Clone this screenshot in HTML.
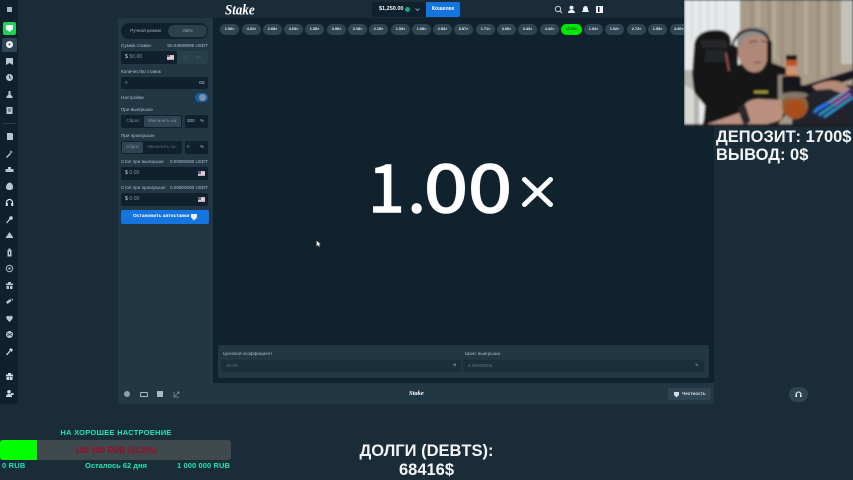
<!DOCTYPE html>
<html><head><meta charset="utf-8"><style>
html,body{margin:0;padding:0;width:853px;height:480px;overflow:hidden;background:#1a2c38;font-family:"Liberation Sans","Noto Sans CJK SC",sans-serif}
#a{position:absolute;left:0;top:0;width:853px;height:480px;filter:blur(.35px)}
.b{position:absolute}
.t{position:absolute;white-space:nowrap;line-height:1;font-size:4.600px;color:#b1bad3}
.r{text-align:right}
.c{position:absolute;top:24px;width:19px;height:11px;border-radius:6px;background:#2f4553;color:#e8edf2;font-size:3.800px;font-weight:bold;line-height:11px;text-align:center}
.inp{position:absolute;background:#0f212e;border-radius:2px}
.gr{color:#7f8fa0}
.s{position:absolute;left:5px;width:9px;height:9px}
.ic{fill:#b9c5d0}
.n{position:absolute;top:151px;white-space:nowrap;font-family:"Noto Sans CJK SC",sans-serif;font-size:66px;line-height:66px;color:#fff;-webkit-text-stroke:1.500px #fff}
</style></head><body><div id="a">
<!-- structural backgrounds -->
<div class="b" style="left:0;top:0;width:18px;height:404px;background:#0f212e"></div>
<div class="b" style="left:18px;top:0;width:835px;height:18px;background:#1a2c38"></div>
<div class="b" style="left:118px;top:18px;width:95px;height:366px;background:#213743"></div>
<div class="b" style="left:213px;top:18px;width:501px;height:366px;background:#10222e"></div>
<div class="b" style="left:118px;top:383px;width:596px;height:21px;background:#213743"></div>
<div class="b" style="left:7px;top:7px;width:5px;height:5px;background:#aab6c0"></div>
<div class="b" style="left:3px;top:22px;width:13px;height:13px;background:#1fd05a;border-radius:2px"></div>
<svg class="s" style="top:24px" viewBox="0 0 9 9"><path d="M1 1h7v4l-3.500 3L1 5z" fill="#fff"/></svg>
<div class="b" style="left:2px;top:38px;width:15px;height:14px;background:#2f4553;border-radius:2px"></div>
<svg class="s" style="top:40px" viewBox="0 0 9 9"><circle cx="4.500" cy="4.500" r="3.500" fill="#eef2f5"/><circle cx="4.500" cy="4.500" r="1" fill="#2f4553"/></svg>
<svg class="s" style="top:57px" viewBox="0 0 9 9"><path class="ic" d="M1 1h7v7L4.500 6 1 8z"/></svg>
<svg class="s" style="top:73px" viewBox="0 0 9 9"><circle class="ic" cx="4.500" cy="4.500" r="3.500"/><path d="M4.500 2.500v2l1.500 1" stroke="#0f212e" fill="none" stroke-width=".8"/></svg>
<svg class="s" style="top:90px" viewBox="0 0 9 9"><path class="ic" d="M3.500 1h2v3.500l2 2v1.500h-6V6.500l2-2z"/></svg>
<svg class="s" style="top:106px" viewBox="0 0 9 9"><path class="ic" d="M1.500 1h6v7h-6z"/><path d="M3 3h3M3 5h3" stroke="#0f212e" stroke-width=".7"/></svg>
<div class="b" style="left:3px;top:123px;width:13px;height:1px;background:#2a3f4c"></div>
<svg class="s" style="top:132px" viewBox="0 0 9 9"><path class="ic" d="M2 1h5l1 1v6H2z"/></svg>
<svg class="s" style="top:149px" viewBox="0 0 9 9"><path class="ic" d="M1 8l4-4 1 1-4 4zM6 1l.5 1.500L8 3l-1.500.5L6 5l-.5-1.500L4 3l1.500-.5z"/></svg>
<svg class="s" style="top:165px" viewBox="0 0 9 9"><path class="ic" d="M3 2h3v2h2.500v3H.5V4H3z"/></svg>
<svg class="s" style="top:182px" viewBox="0 0 9 9"><path class="ic" d="M4.500.5C7 1 8 3 8 5c0 2-1 3-3.500 3S1 7 1 5s1.500-4 3.500-4.500z"/></svg>
<svg class="s" style="top:198px" viewBox="0 0 9 9"><path d="M1.500 6V4.500a3 3 0 0 1 6 0V6" stroke="#dfe6ec" fill="none" stroke-width="1.200"/><rect x=".8" y="5" width="2" height="3" fill="#dfe6ec"/><rect x="6.200" y="5" width="2" height="3" fill="#dfe6ec"/></svg>
<svg class="s" style="top:215px" viewBox="0 0 9 9"><path d="M1.500 8L5 4" stroke="#cdd6de" stroke-width="1.200"/><circle cx="6" cy="3" r="1.800" fill="#cdd6de"/></svg>
<svg class="s" style="top:231px" viewBox="0 0 9 9"><path class="ic" d="M4.500 1l2 3 2 3H.5l2-3z"/></svg>
<svg class="s" style="top:248px" viewBox="0 0 9 9"><path class="ic" d="M2.500 2h4v6.500h-4zM3.500.5h2V2h-2z"/><rect x="4" y="3.500" width="1" height="3" fill="#0f212e"/></svg>
<svg class="s" style="top:264px" viewBox="0 0 9 9"><circle cx="4.500" cy="4.500" r="3.200" fill="none" stroke="#9fb0bd" stroke-width="1.100"/><circle cx="4.500" cy="4.500" r="1.200" fill="#9fb0bd"/></svg>
<svg class="s" style="top:281px" viewBox="0 0 9 9"><path class="ic" d="M1 2.500h7V4H1zM1.500 4.700h2.500V8H1.500zM5 4.700h2.500V8H5zM3 1h3v1.500H3z"/></svg>
<svg class="s" style="top:297px" viewBox="0 0 9 9"><path class="ic" d="M1 5l4-3 1.500 2-4 3zM6 1.500l2 .5-.5 2z"/></svg>
<svg class="s" style="top:314px" viewBox="0 0 9 9"><path class="ic" d="M1 3l2-1.500 1.500 1 1.500-1L8 3 7 5.500 4.500 8 2 5.500z"/></svg>
<svg class="s" style="top:330px" viewBox="0 0 9 9"><circle class="ic" cx="4.500" cy="4.500" r="3.500"/><path d="M2 3l5 3M7 3L2 6" stroke="#0f212e" stroke-width=".7"/></svg>
<svg class="s" style="top:347px" viewBox="0 0 9 9"><path d="M1.500 8L5 4" stroke="#d5dde3" stroke-width="1.300"/><path fill="#d5dde3" d="M4 2.500L6 1l2 2-1.500 2z"/></svg>
<svg class="s" style="top:372px" viewBox="0 0 9 9"><path fill="#d5dde3" d="M1 2.500h7V4.200H1zM1.500 4.800h2.700V8H1.500zM4.800 4.800h2.700V8H4.800zM3 1h3v1.500H3z"/></svg>
<svg class="s" style="top:389px" viewBox="0 0 9 9"><circle fill="#d5dde3" cx="4" cy="2.800" r="1.800"/><path fill="#d5dde3" d="M1 8c0-2 1.500-3 3-3s3 1 3 3z"/><path fill="#d5dde3" d="M6 4h2.500v2H6z"/></svg>

<!-- Header -->
<div class="t" style="left:225px;top:2px;font:italic bold 13px 'Liberation Serif',serif;color:#fff;line-height:14px;transform:scaleY(1.15);transform-origin:left top">Stake</div>
<div class="b" style="left:372px;top:2px;width:54px;height:15px;background:#0f212e;border-radius:2px 0 0 2px"></div>
<div class="t" style="left:379px;top:6.500px;font-size:5.500px;font-weight:bold;color:#eef2f5">$1,250.00</div>
<div class="b" style="left:405px;top:7px;width:5px;height:5px;border-radius:50%;background:#26a17b"></div>
<svg class="b" style="left:415px;top:8px;width:5px;height:3px" viewBox="0 0 5 3"><path d="M.5.500l2 2 2-2" stroke="#b1bad3" fill="none" stroke-width=".8"/></svg>
<div class="b" style="left:426px;top:2px;width:34px;height:15px;background:#1475e1;border-radius:0 2px 2px 0"></div>
<div class="t" style="left:426px;top:6.500px;width:34px;text-align:center;font-size:5.200px;font-weight:bold;color:#fff">Кошелек</div>
<svg class="b" style="left:554px;top:5px;width:9px;height:9px" viewBox="0 0 9 9"><circle cx="4" cy="4" r="2.700" fill="none" stroke="#d5dde3" stroke-width=".9"/><path d="M6 6l2 2" stroke="#d5dde3"/></svg>
<svg class="b" style="left:567px;top:5px;width:9px;height:9px" viewBox="0 0 9 9"><circle cx="4.500" cy="2.800" r="2" fill="#eef2f5"/><path d="M1 8c0-2 1.500-3 3.500-3S8 6 8 8z" fill="#eef2f5"/></svg>
<svg class="b" style="left:581px;top:5px;width:9px;height:9px" viewBox="0 0 9 9"><path d="M4.500 1C6.500 1 7 3 7 5l1 2H1l1-2C2 3 2.500 1 4.500 1z" fill="#eef2f5"/></svg>
<svg class="b" style="left:595px;top:5px;width:9px;height:9px" viewBox="0 0 9 9"><path d="M1 1h7v7H1z" fill="#eef2f5"/><path d="M3 2h1.500v5H3z" fill="#0f212e"/></svg>

<!-- Chips -->
<div class="c" style="left:220px">1.00×</div><div class="c" style="left:242px">4.31×</div><div class="c" style="left:263px">2.68×</div><div class="c" style="left:284px">4.03×</div><div class="c" style="left:305px">1.35×</div><div class="c" style="left:327px">3.96×</div><div class="c" style="left:348px">2.18×</div><div class="c" style="left:369px">2.15×</div><div class="c" style="left:391px">1.53×</div><div class="c" style="left:412px">1.68×</div><div class="c" style="left:433px">2.53×</div><div class="c" style="left:454px">8.87×</div><div class="c" style="left:476px">1.71×</div><div class="c" style="left:497px">3.06×</div><div class="c" style="left:518px">4.43×</div><div class="c" style="left:540px">4.42×</div>
<div class="c" style="left:561px;width:21px;background:#00e701;color:#05360a">17.52×</div>
<div class="c" style="left:584px">1.02×</div><div class="c" style="left:605px">1.02×</div><div class="c" style="left:627px">2.72×</div><div class="c" style="left:648px">1.05×</div><div class="c" style="left:670px;width:14px;border-radius:6px 0 0 6px;text-align:left;padding-left:4px;box-sizing:border-box">4.30×</div>

<!-- Panel -->
<div class="inp" style="left:121px;top:23px;width:87px;height:16px;border-radius:8px"></div>
<div class="b" style="left:168px;top:25px;width:39px;height:12px;border-radius:6px;background:#2a404d"></div>
<div class="t" style="left:122px;top:28.500px;width:47px;text-align:center;color:#9fb0bd">Ручной режим</div>
<div class="t" style="left:168px;top:28.500px;width:39px;text-align:center;color:#9fb0bd">Авто</div>
<div class="t" style="left:121px;top:44px">Сумма ставки</div>
<div class="t r" style="right:645px;top:44px">50.04999995 USDT</div>
<div class="inp" style="left:121px;top:51px;width:56px;height:13px"></div>
<div class="b" style="left:177px;top:51px;width:31px;height:13px;background:#283f4c;border-radius:0 2px 2px 0"></div>
<div class="t gr" style="left:125px;top:55px;font-size:5.200px"><span style="color:#c8d2da">$</span> 50.00</div>
<div class="b" style="left:167px;top:54.500px;width:7px;height:5px;background:linear-gradient(#d8a8b0,#e8d8dc,#c8a0aa)"></div>
<div class="b" style="left:167px;top:54.500px;width:3px;height:2.500px;background:#5a6a90"></div>
<div class="t" style="left:183px;top:55.500px;color:#4e6472">½</div>
<div class="t" style="left:196px;top:55.500px;color:#4e6472">2×</div>
<div class="t" style="left:121px;top:69.500px">Количество ставок</div>
<div class="inp" style="left:121px;top:77px;width:87px;height:12px"></div>
<div class="t gr" style="left:125px;top:80.500px">0</div>
<div class="t" style="left:199px;top:78.500px;font-size:8px">∞</div>
<div class="t" style="left:121px;top:95.500px">Настройки</div>
<div class="b" style="left:195px;top:93px;width:13px;height:9px;border-radius:5px;background:#1d5ea8"></div>
<div class="b" style="left:199px;top:94px;width:7px;height:7px;border-radius:50%;background:#7f929f"></div>
<div class="t" style="left:121px;top:108px">При выигрыше</div>
<div class="inp" style="left:121px;top:115px;width:61px;height:13px"></div>
<div class="b" style="left:144px;top:116px;width:37px;height:11px;background:#2f4553;border-radius:1px"></div>
<div class="t gr" style="left:122px;top:119px;width:22px;text-align:center">Сброс</div>
<div class="t gr" style="left:144px;top:119px;width:37px;text-align:center;color:#8494a2">Увеличить на:</div>
<div class="inp" style="left:185px;top:115px;width:23px;height:13px"></div>
<div class="t" style="left:187px;top:119px">200</div>
<div class="t" style="left:200px;top:119px">%</div>
<div class="t" style="left:121px;top:134px">При проигрыше</div>
<div class="inp" style="left:121px;top:141px;width:61px;height:13px"></div>
<div class="b" style="left:122px;top:142px;width:21px;height:11px;background:#2f4553;border-radius:1px"></div>
<div class="t gr" style="left:122px;top:145px;width:21px;text-align:center">Сброс</div>
<div class="t" style="left:147px;top:145px;color:#5b7080">Увеличить на:</div>
<div class="inp" style="left:185px;top:141px;width:23px;height:13px"></div>
<div class="t gr" style="left:187px;top:145px">0</div>
<div class="t" style="left:200px;top:145px">%</div>
<div class="t" style="left:121px;top:160px">Стоп при выигрыше</div>
<div class="t r" style="right:645px;top:160px">0.00000000 USDT</div>
<div class="inp" style="left:121px;top:167px;width:87px;height:13px"></div>
<div class="t gr" style="left:125px;top:171px;font-size:5.200px"><span style="color:#c8d2da">$</span> 0.00</div>
<div class="b" style="left:198px;top:171px;width:7px;height:5px;background:linear-gradient(#d8a8b0,#e8d8dc,#c8a0aa)"></div>
<div class="b" style="left:198px;top:171px;width:3px;height:2.500px;background:#5a6a90"></div>
<div class="t" style="left:121px;top:186px">Стоп при проигрыше</div>
<div class="t r" style="right:645px;top:186px">0.00000000 USDT</div>
<div class="inp" style="left:121px;top:193px;width:87px;height:13px"></div>
<div class="t gr" style="left:125px;top:197px;font-size:5.200px"><span style="color:#c8d2da">$</span> 0.00</div>
<div class="b" style="left:198px;top:197px;width:7px;height:5px;background:linear-gradient(#d8a8b0,#e8d8dc,#c8a0aa)"></div>
<div class="b" style="left:198px;top:197px;width:3px;height:2.500px;background:#5a6a90"></div>
<div class="b" style="left:121px;top:210px;width:88px;height:14px;background:#1475e1;border-radius:2px"></div>
<div class="t" style="left:133px;top:214.500px;font-size:4.800px;font-weight:bold;color:#fff">Остановить автоставки</div>
<svg class="b" style="left:190px;top:213px;width:8px;height:8px" viewBox="0 0 8 8"><path d="M1 1h6v3.500L4 7.500 1 4.500z" fill="#e8f0fa"/></svg>

<!-- Game -->
<div class="n" style="left:368px">1</div>
<div class="n" style="left:407.500px">.</div>
<div class="n" style="left:424.400px;transform:scaleX(1.2);transform-origin:left top">00</div>
<svg class="b" style="left:521px;top:176px;width:35px;height:33px" viewBox="0 0 35 33"><path d="M3.500 3.500L29.500 28.500M29.500 3.500L3.500 28.500" stroke="#fff" stroke-width="5" stroke-linecap="round"/></svg>
<svg class="b" style="left:316px;top:240px;width:6px;height:8px" viewBox="0 0 6 8"><path d="M.5.500v6l1.500-1.500 1 2 1-.5-1-2h2z" fill="#fff" stroke="#222" stroke-width=".3"/></svg>
<div class="b" style="left:218px;top:345px;width:491px;height:33px;background:#213743;border-radius:2px"></div>
<div class="t" style="left:223px;top:352px;color:#aab6c2">Целевой коэффициент</div>
<div class="t" style="left:465px;top:352px;color:#aab6c2">Шанс выигрыша</div>
<div class="inp" style="left:221px;top:360px;width:240px;height:12px;background:#1a2f3c"></div>
<div class="inp" style="left:463px;top:360px;width:241px;height:12px;background:#1a2f3c"></div>
<div class="t" style="left:226px;top:363.500px;color:#5f7482">20.00</div>
<div class="t" style="left:468px;top:363.500px;color:#5f7482">4.95000000</div>
<div class="t" style="left:453px;top:363px;font-size:6px;color:#b1bad3">×</div>
<div class="t" style="left:695px;top:363px;font-size:6px;color:#8797a5">×</div>

<!-- Footer -->
<div class="b" style="left:124px;top:391px;width:6px;height:6px;border-radius:50%;background:#8fa0ad"></div>
<div class="b" style="left:140px;top:392px;width:6px;height:3px;border:1px solid #a9b7c2;border-radius:1px"></div>
<div class="b" style="left:157px;top:391px;width:6px;height:6px;background:#a9b7c2"></div>
<svg class="b" style="left:173px;top:390.500px;width:7px;height:7px" viewBox="0 0 7 7"><path d="M1 1v5h5M1.500 5.500L6 1M4 1h2v2" stroke="#7f92a0" fill="none" stroke-width=".7"/></svg>
<div class="t" style="left:409px;top:389px;font:italic bold 6.500px 'Liberation Serif',serif;color:#fff;line-height:10px">Stake</div>
<div class="b" style="left:668px;top:388px;width:43px;height:12px;background:#2f4553;border-radius:2px"></div>
<svg class="b" style="left:673px;top:390.500px;width:7px;height:7px" viewBox="0 0 7 7"><path d="M1 1h5v3L3.500 6.500 1 4z" fill="#d5dde3"/></svg>
<div class="t" style="left:682px;top:392px;font-weight:bold;color:#d5dde3">Честность</div>
<div class="b" style="left:789px;top:387px;width:19px;height:15px;border-radius:8px;background:#2f4553"></div>
<svg class="b" style="left:795px;top:391px;width:7px;height:7px" viewBox="0 0 7 7"><path d="M1 5V3.500a2.500 2.500 0 0 1 5 0V5" fill="none" stroke="#fff" stroke-width="1"/><rect x=".5" y="3.500" width="1.500" height="2.500" fill="#fff"/><rect x="5" y="3.500" width="1.500" height="2.500" fill="#fff"/></svg>

<!-- Webcam -->
<svg class="b" style="left:684px;top:0;width:169px;height:127px" viewBox="0 0 169 127">
<defs><filter id="f"><feGaussianBlur stdDeviation="1"/></filter></defs>
<g filter="url(#f)">
<rect width="169" height="127" fill="#a59a8a"/>
<rect x="0" y="0" width="56" height="127" fill="#e6e9ea"/>
<path d="M8 0v40M16 0v35M24 0v30M32 0v32M42 0v30" stroke="#d6dbdd" stroke-width="2"/>
<rect x="0" y="70" width="15" height="57" fill="#b5b5b0"/>
<path d="M0 85l10 5v37H0z" fill="#d8d8d4"/>
<rect x="56" y="0" width="113" height="85" fill="#a79a88"/>
<path d="M68 0v70M85 0v70M98 0v70M110 0v80M134 0v80M147 0v78" stroke="#968a7a" stroke-width="2"/>
<path d="M74 0v70M90 0v60M122 0v75M140 0v75" stroke="#b3a998" stroke-width="4"/>
<rect x="157" y="0" width="12" height="64" fill="#c4c2b8"/>
<path d="M10 48c0-12 8-18 22-18 10 0 15 4 15 12v25l-6 40-15 5-16-20-2-18z" fill="#141416"/>
<path d="M16 40h26l2 8H18z" fill="#26272b"/>
<path d="M22 50h22v12H20z" fill="#242529"/>
<path d="M20 118c2-30 8-46 28-52l32-6 22 8 6 16-6 30-10 13H18z" fill="#151518"/>
<rect x="94" y="75" width="9" height="25" fill="#8a8378"/>
<path d="M108 85h61v42h-61z" fill="#22232a"/>
<g transform="translate(-7,3)">
<path d="M60 30c5-6 20-9 26-3 5 3 7 10 7 18l-4 15c-3 9-10 11-17 8-7-4-12-14-12-24z" fill="#b08878"/>
<path d="M60 36c0-8 10-12 18-12s13 3 14 12c-8-5-22-5-26 0l-2 10z" fill="#8c8b8b"/>
<path d="M72 39l8-1M84 38l7 1" stroke="#55433c" stroke-width="1.300"/>
<path d="M77 60l7-1" stroke="#6d4a44" stroke-width="1.300"/>
<path d="M55 48c0-14 10-22 22-21 10 1 16 6 16 18" fill="none" stroke="#1a1a1c" stroke-width="2.500"/>
<rect x="50" y="42" width="11" height="25" rx="5" fill="#151517"/>
<rect x="90" y="38" width="5" height="22" rx="2" fill="#151517"/>
<path d="M49 50l3 18" stroke="#c96a70" stroke-width="1"/>
</g>
<rect x="102" y="55" width="11" height="8" fill="#191818"/>
<rect x="102" y="60" width="11" height="17" fill="#b9542a"/>
<rect x="102" y="66" width="11" height="9" fill="#cc9470"/>
<rect x="98" y="76" width="19" height="18" rx="3" fill="#17171a"/>
<path d="M112 88L169 70v9l-50 16z" fill="#15161a"/>
<path d="M128 86c10-4 20-7 28-4l12 8-8 4-14-5-14 1z" fill="#b68a78"/>
<path d="M126 113l40-24 3 3v8l-28 19z" fill="#1d2a6e"/>
<path d="M130 112l32-21M135 115l31-21M140 117l29-20" stroke="#39a8c8" stroke-width="1.800"/>
<path d="M146 103l18-12M151 105l16-11" stroke="#d05090" stroke-width="1.200"/>
<path d="M132 110l12-7" stroke="#2a7ce8" stroke-width="3"/>
<path d="M70 92h14" stroke="#a8a03c" stroke-width="2.500"/>
<path d="M14 127c12-4 30-10 44-15 1-9 8-13 17-13l23 1 3 8-4 12-24 7H14z" fill="#ba9180"/>
<rect x="56" y="105" width="8" height="19" rx="3" fill="#26282c" transform="rotate(-18 60 114)"/>
<ellipse cx="111" cy="106" rx="13" ry="13" fill="#8f6038"/>
<ellipse cx="111" cy="109" rx="11" ry="9" fill="#a84e1c"/>
<ellipse cx="111" cy="95" rx="13" ry="3" fill="#84746a"/>
<rect x="0" y="124" width="169" height="3" fill="#1b1e22"/>
</g></svg>

<!-- Overlay text -->
<div class="t" style="left:716px;top:129px;font-size:16.500px;font-weight:bold;color:#f2f4f5">ДЕПОЗИТ: 1700$</div>
<div class="t" style="left:716px;top:147px;font-size:16.500px;font-weight:bold;color:#f2f4f5">ВЫВОД: 0$</div>
<div class="t" style="left:0;top:429px;width:232px;text-align:center;font-size:7.500px;font-weight:bold;letter-spacing:.25px;color:#1fe6b0">НА ХОРОШЕЕ НАСТРОЕНИЕ</div>
<div class="b" style="left:0;top:440px;width:231px;height:20px;background:#3f4a4f;border-radius:3px"></div>
<div class="b" style="left:0;top:440px;width:37px;height:20px;background:#00ff00;border-radius:3px 0 0 3px"></div>
<div class="t" style="left:0;top:446px;width:232px;text-align:center;font-size:8.300px;font-weight:bold;color:#a00a26">100 000 RUB (10.0%)</div>
<div class="t" style="left:2px;top:462px;font-size:7.500px;font-weight:bold;letter-spacing:.2px;color:#1fe6b0">0 RUB</div>
<div class="t" style="left:0;top:462px;width:232px;text-align:center;font-size:7.500px;font-weight:bold;color:#1fe6b0">Осталось 62 дня</div>
<div class="t r" style="right:623px;top:462px;font-size:7.500px;font-weight:bold;letter-spacing:.1px;color:#1fe6b0">1 000 000 RUB</div>
<div class="t" style="left:300px;top:443px;width:253px;text-align:center;font-size:16.500px;font-weight:bold;color:#f4f5f6">ДОЛГИ (DEBTS):</div>
<div class="t" style="left:300px;top:462px;width:253px;text-align:center;font-size:16.500px;font-weight:bold;color:#f4f5f6">68416$</div>
</div></body></html>
